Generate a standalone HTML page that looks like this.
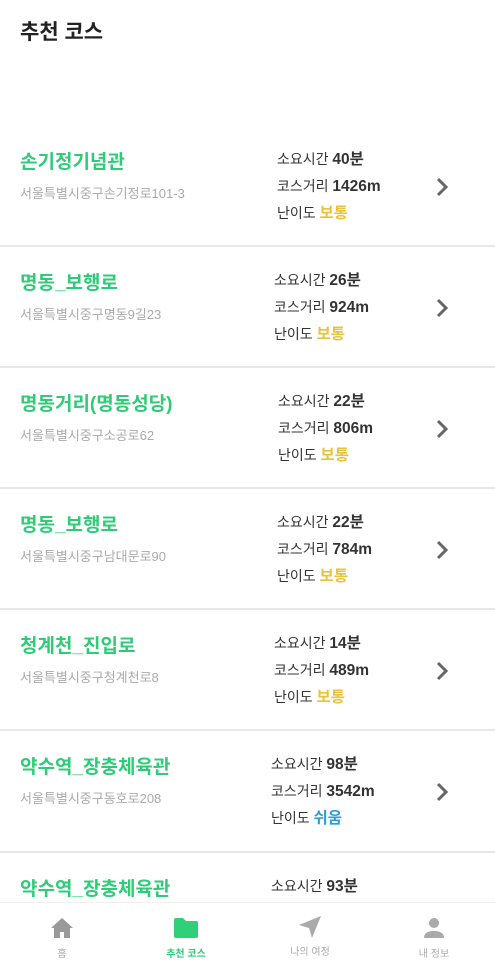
<!DOCTYPE html>
<html><head><meta charset="utf-8"><style>
*{margin:0;padding:0;box-sizing:border-box}
body{width:495px;height:960px;overflow:hidden;background:#fff;font-family:"Liberation Sans","Noto Sans CJK KR",sans-serif;position:relative}
.hdr{position:absolute;left:20px;top:16px;font-size:21px;font-weight:bold;color:#222}
.row{position:absolute;left:0;width:495px;height:121px;border-bottom:2px solid #e8e8e8}
.t{position:absolute;left:20px;top:21px;font-size:19px;font-weight:bold;color:#2fcc78;white-space:nowrap}
.a{position:absolute;left:20px;top:57px;font-size:13px;color:#aaa;white-space:nowrap}
.i{position:absolute;font-size:14px;color:#333;white-space:nowrap;line-height:27px;top:20px}
.i b{font-size:15.5px;color:#333}
.i b.y{color:#e8c33b}.i b.bl{color:#2a9fd6}
.ch{position:absolute;left:435px;top:51px}
.nav{position:absolute;left:0;top:902px;width:495px;height:58px;background:#fff;border-top:1px solid #f0f0f0}
.n{position:absolute;top:0;width:124px;text-align:center;font-size:10px;color:#aaa}
.n svg{display:block;margin:14px auto 6px}
</style></head><body>
<div class="hdr">추천 코스</div>

<div class="row" style="top:126px"><div class="t">손기정기념관</div><div class="a">서울특별시중구손기정로101-3</div><div class="i" style="left:277px">소요시간 <b>40분</b><br>코스거리 <b>1426m</b><br>난이도 <b class="y">보통</b></div><svg class="ch" width="14" height="20" viewBox="0 0 14 20"><path d="M3 2l8 8-8 8" fill="none" stroke="#666" stroke-width="3"/></svg></div>
<div class="row" style="top:247px"><div class="t">명동_보행로</div><div class="a">서울특별시중구명동9길23</div><div class="i" style="left:274px">소요시간 <b>26분</b><br>코스거리 <b>924m</b><br>난이도 <b class="y">보통</b></div><svg class="ch" width="14" height="20" viewBox="0 0 14 20"><path d="M3 2l8 8-8 8" fill="none" stroke="#666" stroke-width="3"/></svg></div>
<div class="row" style="top:368px"><div class="t">명동거리(명동성당)</div><div class="a">서울특별시중구소공로62</div><div class="i" style="left:278px">소요시간 <b>22분</b><br>코스거리 <b>806m</b><br>난이도 <b class="y">보통</b></div><svg class="ch" width="14" height="20" viewBox="0 0 14 20"><path d="M3 2l8 8-8 8" fill="none" stroke="#666" stroke-width="3"/></svg></div>
<div class="row" style="top:489px"><div class="t">명동_보행로</div><div class="a">서울특별시중구남대문로90</div><div class="i" style="left:277px">소요시간 <b>22분</b><br>코스거리 <b>784m</b><br>난이도 <b class="y">보통</b></div><svg class="ch" width="14" height="20" viewBox="0 0 14 20"><path d="M3 2l8 8-8 8" fill="none" stroke="#666" stroke-width="3"/></svg></div>
<div class="row" style="top:610px"><div class="t">청계천_진입로</div><div class="a">서울특별시중구청계천로8</div><div class="i" style="left:274px">소요시간 <b>14분</b><br>코스거리 <b>489m</b><br>난이도 <b class="y">보통</b></div><svg class="ch" width="14" height="20" viewBox="0 0 14 20"><path d="M3 2l8 8-8 8" fill="none" stroke="#666" stroke-width="3"/></svg></div>
<div class="row" style="top:731px;height:122px"><div class="t">약수역_장충체육관</div><div class="a">서울특별시중구동호로208</div><div class="i" style="left:271px">소요시간 <b>98분</b><br>코스거리 <b>3542m</b><br>난이도 <b class="bl">쉬움</b></div><svg class="ch" width="14" height="20" viewBox="0 0 14 20"><path d="M3 2l8 8-8 8" fill="none" stroke="#666" stroke-width="3"/></svg></div>
<div class="row" style="top:853px;border:none"><div class="t">약수역_장충체육관</div><div class="i" style="left:271px">소요시간 <b>93분</b></div></div>

<div class="nav">
<div class="n" style="left:0"><svg width="24" height="22" viewBox="0 0 24 22"><path d="M12 1L1 11h3v10h6v-6h4v6h6V11h3z" fill="#999"/></svg>홈</div>
<div class="n" style="left:124px;color:#2fcc78;font-weight:bold"><svg width="26" height="22" viewBox="0 0 26 22"><path d="M1 3a2 2 0 0 1 2-2h7l3 3h10a2 2 0 0 1 2 2v13a2 2 0 0 1-2 2H3a2 2 0 0 1-2-2z" fill="#2fd077"/></svg>추천 코스</div>
<div class="n" style="left:248px"><svg width="24" height="24" viewBox="0 0 24 24" style="margin-top:12px;margin-bottom:4px"><path d="M23 1L1 10l10 3 3 10z" fill="#aaa"/></svg>나의 여정</div>
<div class="n" style="left:372px"><svg width="22" height="22" viewBox="0 0 22 22"><circle cx="11" cy="6" r="5" fill="#aaa"/><path d="M1 21c0-5 4-7 10-7s10 2 10 7z" fill="#aaa"/></svg>내 정보</div>
</div>
</body></html>
